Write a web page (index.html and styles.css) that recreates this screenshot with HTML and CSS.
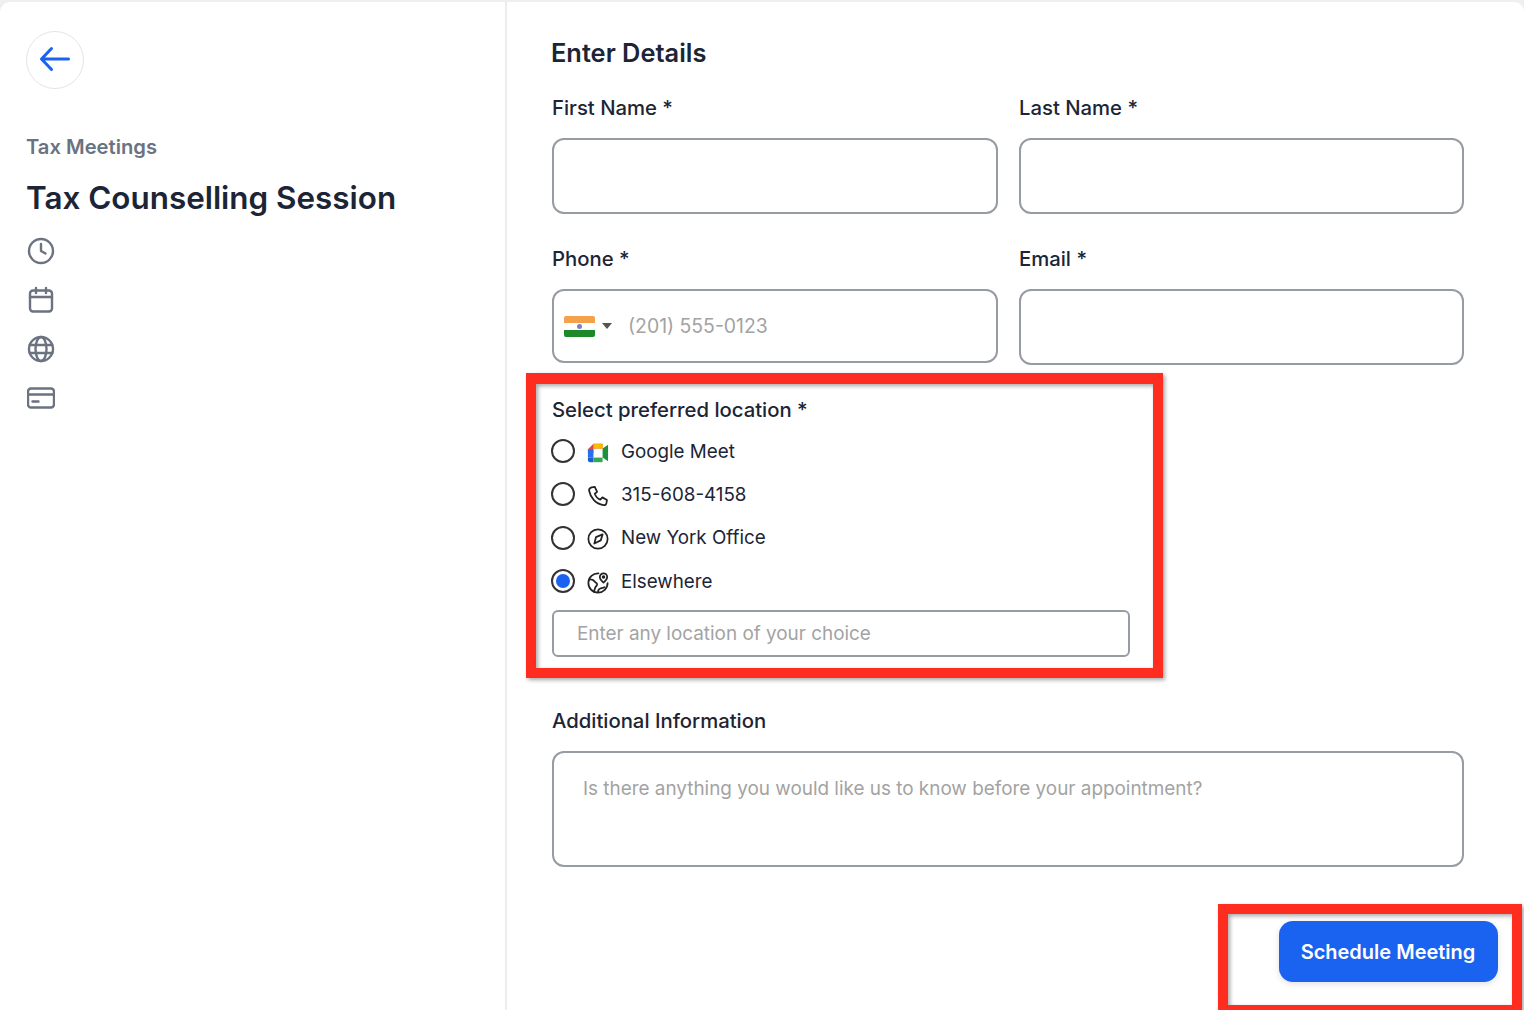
FILE: index.html
```html
<!DOCTYPE html>
<html lang="en">
  <head>
    <meta charset="UTF-8" />
    <meta name="viewport" content="width=device-width, initial-scale=1.0" />
    <title>Tax Counselling Session</title>
    <link rel="stylesheet" href="styles.css">
  </head>
  <body>
    <div class="card">
      <aside class="sidebar">
        <button class="back" aria-label="Back">
          <svg class="back-arrow" width="32" height="32" viewBox="0 0 32 32" fill="none" stroke="#1a62f0" stroke-width="3" stroke-linecap="round" stroke-linejoin="round">
            <path d="M29.500 16H2.500M12.500 5.500L2.500 16L12.500 26.500" />
          </svg>
        </button>
        <p class="group">Tax Meetings</p>
        <h1 class="title">Tax Counselling Session</h1>
        <ul class="meta">
          <li>
            <svg class="meta-icon" viewBox="0 0 28 28">
              <circle cx="14" cy="14" r="12" />
              <path d="M14 7v7l4.500 2.500" />
            </svg>
          </li>
          <li>
            <svg class="meta-icon" viewBox="0 0 28 28">
              <rect x="3" y="4.500" width="22" height="21" rx="3" />
              <path d="M3 11h22M9 2v5M19 2v5" />
            </svg>
          </li>
          <li>
            <svg class="meta-icon" viewBox="0 0 28 28">
              <circle cx="14" cy="14" r="12" />
              <ellipse cx="14" cy="14" rx="5.500" ry="12" />
              <path d="M2.800 10h22.400M2.800 18h22.400" />
            </svg>
          </li>
          <li>
            <svg class="meta-icon" viewBox="0 0 28 28">
              <rect x="1" y="4.500" width="26" height="19" rx="3" />
              <path d="M1 10.500h26M5.500 17.500h6" />
            </svg>
          </li>
        </ul>
      </aside>

      <main class="content">
        <h2 class="heading">Enter Details</h2>
        <form class="form">
          <div class="row row-names">
            <div class="field">
              <label class="label">First Name *</label>
              <input class="input input-tall" type="text" />
            </div>
            <div class="field">
              <label class="label">Last Name *</label>
              <input class="input input-tall" type="text" />
            </div>
          </div>

          <div class="row row-contact">
            <div class="field">
              <label class="label">Phone *</label>
              <div class="input phone">
                <svg class="flag" width="31" height="21" viewBox="0 0 31 21">
                  <rect width="31" height="7" fill="#f5a04a" />
                  <rect y="7" width="31" height="7" fill="#fff" />
                  <rect y="14" width="31" height="7" fill="#1d8a2a" />
                  <circle cx="15.500" cy="10.500" r="2.500" fill="#7f7fc4" />
                </svg>
                <span class="caret"></span>
                <span class="phone-hint">(201) 555-0123</span>
              </div>
            </div>
            <div class="field">
              <label class="label">Email *</label>
              <input class="input input-tall" type="text" />
            </div>
          </div>

          <div class="locations">
            <label class="label">Select preferred location *</label>
            <div class="option">
              <span class="radio"></span>
              <svg class="option-icon" viewBox="0 0 24 24">
                <path d="M1 8L7 2h10v5H7v5H1z" fill="#e8453c" />
                <path d="M7 2h10v5H7z" fill="#fbbc04" />
                <path d="M1 8h6v9H1z" fill="#2a6fe8" />
                <path d="M1 17h6v5H3a2 2 0 0 1-2-2z" fill="#1a5fd0" />
                <path d="M7 17h10v5H7z" fill="#34a853" />
                <path d="M17 7v10l6 4V3z" fill="#1f8e3d" />
                <path d="M17 2v5h-4V2z" fill="#f6b704" />
              </svg>
              <span>Google Meet</span>
            </div>
            <div class="option">
              <span class="radio"></span>
              <svg class="option-icon line" viewBox="0 0 24 24">
                <path d="M5 2.500l3.500-.5 2.500 5.500-2.500 2c1 2.800 3.200 5.500 6 6.500l2.300-2.500 5 2.800-.6 3.400c-.3 1.500-1.800 2.500-3.300 2.200C9.500 20.500 3.800 14 2.300 6.300 2 4.500 3.200 3 5 2.500z" />
              </svg>
              <span>315-608-4158</span>
            </div>
            <div class="option">
              <span class="radio"></span>
              <svg class="option-icon line" viewBox="0 0 24 24">
                <circle cx="12" cy="12" r="10.500" />
                <path d="M17 7l-2 6.500L8 17l1.800-7z" />
              </svg>
              <span>New York Office</span>
            </div>
            <div class="option">
              <span class="radio radio-on"></span>
              <svg class="option-icon line" viewBox="0 0 24 24">
                <path d="M12.500 1.500A10.500 10.500 0 1 0 22.500 12" />
                <path d="M2.500 8c3 0 4.500.5 5.500 2s2.500 1.500 3 3-1.500 2.500-2 4-1 3.500-1.500 4.500" />
                <path d="M12 22c0-2 1-3.500 2.500-4s3-.5 4.500-1.500" />
                <path d="M18 11.500c-2.300-2-4-3.800-4-6a4 4 0 0 1 8 0c0 2.200-1.700 4-4 6z" />
                <circle cx="18" cy="5.500" r="1" />
              </svg>
              <span>Elsewhere</span>
            </div>
            <input class="input location-input" type="text" placeholder="Enter any location of your choice" />
          </div>

          <div class="field field-info">
            <label class="label">Additional Information</label>
            <textarea class="input notes" placeholder="Is there anything you would like us to know before your appointment?"></textarea>
          </div>

          <div class="actions">
            <button class="submit" type="button">Schedule Meeting</button>
          </div>
        </form>
      </main>
    </div>

    <div class="mark mark-location"></div>
    <div class="mark mark-submit"></div>
  </body>
</html>
```

FILE: styles.css
```css
*,
*::before,
*::after {
  box-sizing: border-box;
}
:root {
  --ink: #1c2536;
  --muted: #6b7280;
  --line: #979ba3;
  --hint: #a3a3a3;
  --blue: #1a62f0;
  --red: #ff2d1f;
}
html,
body {
  height: 100%;
}
body {
  margin: 0;
  height: 1010px;
  overflow: hidden;
  background: #efefef;
  font-family: "Inter", sans-serif;
  color: var(--ink);
  position: relative;
}

.card {
  margin-top: 2px;
  height: 1008px;
  display: flex;
  background: #fff;
  border-radius: 10px 10px 0 0;
}

.sidebar {
  width: 507px;
  flex: none;
  padding: 29px 0 0 26px;
  border-right: 2px solid #ececec;
}
.back {
  width: 58px;
  height: 58px;
  padding: 0;
  display: flex;
  align-items: center;
  justify-content: center;
  background: #fff;
  border: 1px solid #e5e5e5;
  border-radius: 50%;
}
.back-arrow {
  margin-top: -2px;
}
.group {
  margin: 45px 0 0;
  font-size: 20.200px;
  line-height: 26px;
  font-weight: 600;
  color: var(--muted);
}
.title {
  margin: 17px 0 0;
  font-size: 31.400px;
  line-height: 42px;
  font-weight: 600;
}
.meta {
  list-style: none;
  margin: 18px 0 0 1px;
  padding: 0;
  display: flex;
  flex-direction: column;
  gap: 21px;
}
.meta li {
  height: 28px;
}
.meta-icon {
  display: block;
  width: 28px;
  height: 28px;
  fill: none;
  stroke: var(--muted);
  stroke-width: 2.400;
  stroke-linecap: round;
  stroke-linejoin: round;
}

.content {
  flex: 1;
  padding: 33px 60px 0 44px;
}
.heading {
  margin: 0;
  font-size: 25.400px;
  line-height: 36px;
  font-weight: 600;
}
.form {
  margin-top: 23px;
}
.row {
  display: grid;
  grid-template-columns: 446px 445px;
  gap: 21px;
  padding-left: 1px;
}
.row-contact {
  margin-top: 31px;
}
.label {
  display: block;
  font-size: 20.300px;
  line-height: 28px;
  font-weight: 500;
}
.input {
  display: block;
  width: 100%;
  margin-top: 16px;
  background: #fff;
  border: 2px solid var(--line);
  border-radius: 12px;
  font-family: inherit;
  font-size: 18.900px;
  color: var(--ink);
  outline: none;
}
.input::placeholder {
  color: var(--hint);
  opacity: 1;
}
.input-tall {
  height: 76px;
}

.phone {
  height: 74px;
  display: flex;
  align-items: center;
  padding-left: 10px;
}
.flag {
  flex: none;
  border-radius: 2px;
}
.caret {
  margin-left: 7px;
  border-left: 5px solid transparent;
  border-right: 5px solid transparent;
  border-top: 6px solid #555;
}
.phone-hint {
  margin-left: 16px;
  font-size: 19.400px;
  color: var(--hint);
}

.locations {
  margin: 31px 0 0 1px;
  width: 578px;
}
.option {
  display: flex;
  align-items: center;
  height: 28px;
  margin-top: 15.400px;
  font-size: 18.800px;
}
.locations .label + .option {
  margin-top: 13px;
}
.radio {
  flex: none;
  width: 24px;
  height: 24px;
  margin-left: -1px;
  border: 2px solid #333;
  border-radius: 50%;
  background: #fff;
}
.radio-on {
  padding: 3px;
  background: var(--blue);
  background-clip: content-box;
}
.option-icon {
  flex: none;
  width: 22px;
  height: 22px;
  margin: 3px 12px 0 12px;
}
.option-icon.line {
  fill: none;
  stroke: #222;
  stroke-width: 1.900;
  stroke-linecap: round;
  stroke-linejoin: round;
}
.location-input {
  height: 47px;
  margin-top: 15px;
  padding: 0 23px;
  border-radius: 6px;
}

.field-info {
  margin: 50px 0 0 1px;
  width: 912px;
}
.notes {
  height: 116px;
  padding: 23px 29px;
  resize: none;
  line-height: 26px;
}

.actions {
  display: flex;
  justify-content: flex-end;
  margin: 54px -33.500px 0 0;
}
.submit {
  width: 219px;
  height: 61px;
  border: 0;
  border-radius: 14px;
  background: var(--blue);
  color: #fff;
  font-family: inherit;
  font-size: 20px;
  font-weight: 600;
  box-shadow: 0 2px 6px rgba(0, 0, 0, 0.12);
}

/* red annotation boxes sitting over the screenshot */
.mark {
  position: absolute;
  border: 10px solid var(--red);
  box-shadow: 2px 2px 4px rgba(0, 0, 0, 0.35), inset 2px 2px 4px rgba(0, 0, 0, 0.35);
}
.mark-location {
  left: 526px;
  top: 373px;
  width: 637px;
  height: 305px;
  border-top-width: 11px;
}
.mark-submit {
  left: 1218px;
  top: 904px;
  width: 304px;
  height: 111px;
}
```
